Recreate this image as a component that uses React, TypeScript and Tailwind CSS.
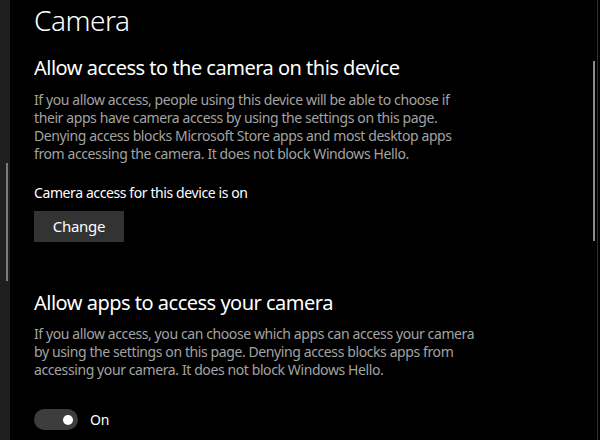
import React from "react";

const font = { fontFamily: '"Segoe UI", "Noto Sans", "Open Sans", sans-serif' };

function Toggle({ on }: { on: boolean }) {
  return (
    <div className="flex items-center gap-3">
      <div className="flex h-[21px] w-[44px] items-center justify-end rounded-full bg-[#3d3d3d] pr-[5px]">
        <div className="h-[10px] w-[10px] rounded-full bg-white" />
      </div>
      <span className="text-[14px] leading-[20px] tracking-[-0.3px] text-white">{on ? "On" : "Off"}</span>
    </div>
  );
}

export default function App() {
  return (
    <div className="flex h-[440px] w-[600px] overflow-hidden bg-black" style={font}>
      {/* left nav pane edge */}
      <div className="flex w-[10px] shrink-0 flex-col bg-[#1f1f1f] pl-[6px] pt-[163px]">
        <div className="h-[118px] w-[2px] bg-[#7a7a7a]" />
      </div>

      {/* page */}
      <div className="flex-1 whitespace-nowrap pl-[24px]">
        <h1 className="text-[28px] font-light leading-[40px] tracking-[-0.5px] text-white">Camera</h1>

        <h2 className="mt-[14px] text-[20px] leading-[28px] tracking-[-0.5px] text-white">
          Allow access to the camera on this device
        </h2>
        <p className="mt-[9px] text-[14px] leading-[18px] tracking-[-0.4px] text-[#a3a3a3]">
          If you allow access, people using this device will be able to choose if
          <br />
          their apps have camera access by using the settings on this page.
          <br />
          Denying access blocks Microsoft Store apps and most desktop apps
          <br />
          from accessing the camera. It does not block Windows Hello.
        </p>

        <p className="mt-[20px] text-[14px] leading-[20px] tracking-[-0.4px] text-white">
          Camera access for this device is on
        </p>
        <button className="mt-[8px] block h-[31px] w-[90px] bg-[#333333] text-[15px] tracking-[-0.3px] text-white">
          Change
        </button>

        <h2 className="mt-[47px] text-[20px] leading-[28px] tracking-[-0.5px] text-white">
          Allow apps to access your camera
        </h2>
        <p className="mt-[8px] text-[14px] leading-[18px] tracking-[-0.4px] text-[#a3a3a3]">
          If you allow access, you can choose which apps can access your camera
          <br />
          by using the settings on this page. Denying access blocks apps from
          <br />
          accessing your camera. It does not block Windows Hello.
        </p>

        <div className="mt-[30px]">
          <Toggle on />
        </div>
      </div>

      {/* right scrollbar */}
      <div className="flex w-[8px] shrink-0 pl-[1px]">
        <div className="mt-[61px] h-[180px] w-[2px] bg-[#8a8a8a]" />
        <div className="ml-[2px] h-full w-px bg-[#2e2e2e]" />
      </div>
    </div>
  );
}
